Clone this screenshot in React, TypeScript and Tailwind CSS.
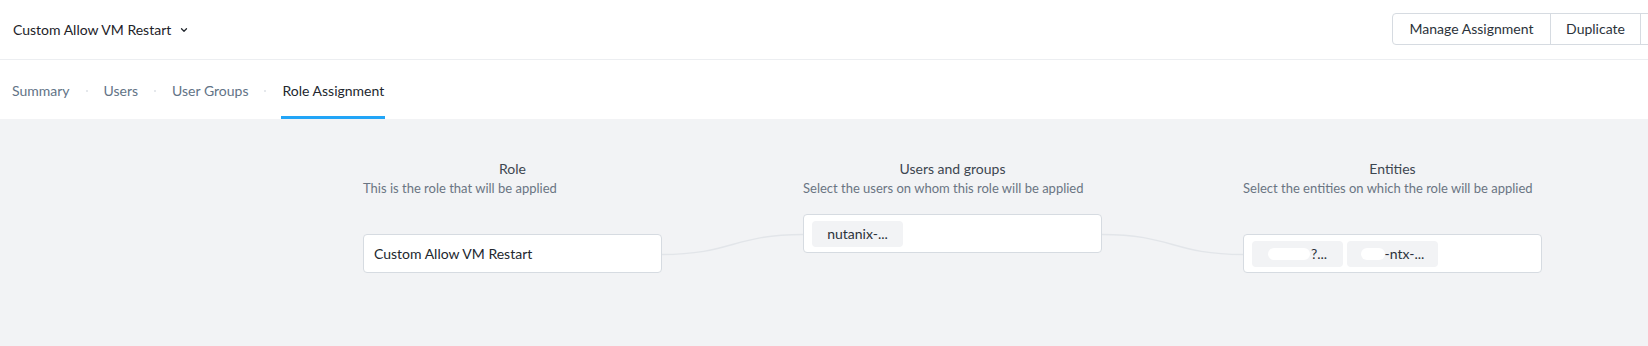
import { ChevronDown } from 'lucide-react'

const tabs = ['Summary', 'Users', 'User Groups', 'Role Assignment']

function Connector({ down }: { down?: boolean }) {
  const d = down ? 'M0 1.5 C70 1.5 71 21.5 141 21.5' : 'M0 21.5 C70 21.5 71 1.5 141 1.5'
  return (
    <div className="w-[141px] shrink-0 mt-[74px]">
      <svg width="141" height="23" viewBox="0 0 141 23" className="block">
        <path d={d} fill="none" stroke="#e2e5e9" strokeWidth="1.5" />
      </svg>
    </div>
  )
}

function Column({
  title,
  subtitle,
  offset,
  children,
}: {
  title: string
  subtitle: string
  offset: string
  children: React.ReactNode
}) {
  return (
    <div className="w-[299px] shrink-0 flex flex-col">
      <div className="text-center text-[14px] leading-[20px] text-[#3d4650] whitespace-nowrap">{title}</div>
      <div className="text-[13px] leading-[20px] text-[#6a7583] whitespace-nowrap -mt-px">{subtitle}</div>
      <div
        className={`${offset} h-[39px] bg-white border border-[#d6dbe1] rounded-[4px] flex items-center px-[8px] gap-[4px]`}
      >
        {children}
      </div>
    </div>
  )
}

function Chip({ children }: { children: React.ReactNode }) {
  return (
    <span className="w-[91px] h-[26px] rounded-[4px] bg-[#f2f3f5] flex items-center justify-center text-[14px] text-[#2b323a] whitespace-nowrap overflow-hidden">
      {children}
    </span>
  )
}

export default function App() {
  return (
    <div
      className="min-h-screen w-full overflow-hidden flex flex-col bg-white"
      style={{ fontFamily: 'Lato, "Open Sans", sans-serif' }}
    >
      <header className="h-[60px] shrink-0 border-b border-[#eceef1] flex items-center pl-[13px]">
        <div className="flex items-center text-[14px] text-[#1d2228]">
          Custom Allow VM Restart
          <ChevronDown className="ml-[8px] w-[10px] h-[10px] text-[#22272e]" strokeWidth={3} />
        </div>
        <div className="ml-auto w-[256px] shrink-0 mb-[2px]">
          <div className="flex h-[32px] w-[340px] border border-[#d6dbe1] rounded-[4px] bg-white text-[14px] text-[#2b323a]">
            <button className="w-[157px] shrink-0 flex items-center justify-center">Manage Assignment</button>
            <button className="w-[90px] shrink-0 flex items-center justify-center border-l border-[#d6dbe1]">
              Duplicate
            </button>
            <button className="w-[90px] shrink-0 border-l border-[#d6dbe1]" aria-label="More actions" />
          </div>
        </div>
      </header>

      <nav className="h-[59px] shrink-0 flex items-stretch pl-[12px] text-[14px]">
        {tabs.map((t, i) => {
          const active = t === 'Role Assignment'
          return (
            <div key={t} className="flex items-stretch">
              {i > 0 && (
                <span className="flex items-center mx-[16px] pt-[2px]">
                  <span className="w-[2px] h-[2px] rounded-full bg-[#dde1e6]" />
                </span>
              )}
              <div className="relative flex items-center pt-[1px]">
                <span className={active ? 'text-[#22272e]' : 'text-[#627386]'}>{t}</span>
                {active && <span className="absolute left-[-1px] right-[-1px] bottom-0 h-[3px] bg-[#22a5f7]" />}
              </div>
            </div>
          )
        })}
      </nav>

      <main className="flex-1 bg-[#f2f3f5] pt-[40px] pl-[363px] flex items-start">
        <Column title="Role" subtitle="This is the role that will be applied" offset="mt-[36px]">
          <span className="pl-[2px] text-[14px] text-[#22272e] whitespace-nowrap">Custom Allow VM Restart</span>
        </Column>
        <Connector />
        <Column title="Users and groups" subtitle="Select the users on whom this role will be applied" offset="mt-[16px]">
          <Chip>nutanix-...</Chip>
        </Column>
        <Connector down />
        <Column title="Entities" subtitle="Select the entities on which the role will be applied" offset="mt-[36px]">
          <Chip>
            <span className="inline-block w-[42px] h-[12px] rounded-full bg-white mr-[1px]" />
            ?...
          </Chip>
          <Chip>
            <span className="inline-block w-[24px] h-[12px] rounded-full bg-white" />
            -ntx-...
          </Chip>
        </Column>
      </main>
    </div>
  )
}
